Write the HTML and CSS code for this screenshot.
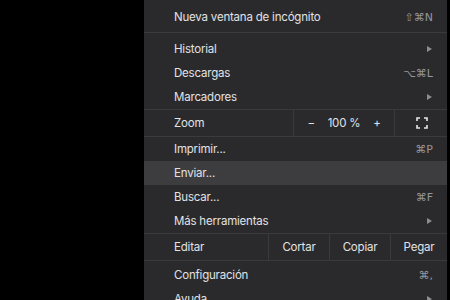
FILE: index.html
```html
<!DOCTYPE html>
<html lang="es">
<head>
  <meta charset="UTF-8">
  <title>Menú</title>
  <link rel="stylesheet" href="styles.css">
</head>
<body>
  <div class="menu">
    <div class="item first">
      <span>Nueva ventana de incógnito</span>
      <span class="key">⇧⌘N</span>
    </div>
    <div class="sep"></div>
    <div class="item">
      <span>Historial</span>
      <span class="arrow"></span>
    </div>
    <div class="item">
      <span>Descargas</span>
      <span class="key">⌥⌘L</span>
    </div>
    <div class="item">
      <span>Marcadores</span>
      <span class="arrow"></span>
    </div>

    <!-- Zoom -->
    <div class="row zoom">
      <div class="cell label">Zoom</div>
      <div class="cell zoom-ctrl">
        <span>−</span>
        <span class="pct">100 %</span>
        <span>+</span>
      </div>
      <div class="cell full">
        <svg width="12" height="12" viewBox="0 0 12 12" fill="none" stroke="#e6e6e6" stroke-width="1.6">
          <path d="M1 4V1h3M8 1h3v3M11 8v3H8M4 11H1V8"/>
        </svg>
      </div>
    </div>

    <div class="item">
      <span>Imprimir...</span>
      <span class="key">⌘P</span>
    </div>
    <div class="item active">
      <span>Enviar...</span>
    </div>
    <div class="item">
      <span>Buscar...</span>
      <span class="key">⌘F</span>
    </div>
    <div class="item">
      <span>Más herramientas</span>
      <span class="arrow"></span>
    </div>

    <!-- Editar -->
    <div class="row edit">
      <div class="cell label">Editar</div>
      <div class="cell btn">Cortar</div>
      <div class="cell btn">Copiar</div>
      <div class="cell btn">Pegar</div>
    </div>

    <div class="item gap">
      <span>Configuración</span>
      <span class="key">⌘,</span>
    </div>
    <div class="item">
      <span>Ayuda</span>
      <span class="arrow"></span>
    </div>
  </div>
</body>
</html>
```

FILE: styles.css
```css
body {
  margin: 0;
  background-color: black;
  font-family: Inter, "Liberation Sans", sans-serif;
  font-size: 11.5px;
  letter-spacing: -0.2px;
  color: #e2e2e4;
  height: 300px;
  overflow: hidden;
}

.menu {
  margin-left: 144px;
  width: 303px;
  height: 300px;
  background-color: #2a2a2d;
  overflow: hidden;
}

.item {
  display: flex;
  justify-content: space-between;
  align-items: center;
  height: 24px;
  padding: 0 14px 0 30px;
}

.item.first {
  margin-top: 5px;
}

.item.gap {
  margin-top: 2px;
}

.item.active {
  background-color: #3d3d40;
}

.key {
  color: #96969a;
  font-family: "DejaVu Sans", sans-serif;
  font-size: 11px;
  letter-spacing: 0;
}

.arrow {
  width: 0;
  height: 0;
  border-top: 3.5px solid transparent;
  border-bottom: 3.5px solid transparent;
  border-left: 5px solid #8d8d91;
  margin-right: 1px;
}

.sep {
  height: 1px;
  margin: 3px 0 4px;
  background-color: #3a3a3d;
}

/* filas con celdas */
.row {
  display: flex;
  height: 26px;
  border-top: 1px solid #3a3a3d;
  border-bottom: 1px solid #3a3a3d;
}

.cell {
  display: flex;
  align-items: center;
}

.cell.label {
  padding-left: 30px;
}

.zoom .label {
  width: 119px;
}

.zoom-ctrl {
  width: 102px;
  border-left: 1px solid #3a3a3d;
  border-right: 1px solid #3a3a3d;
  justify-content: space-around;
  padding: 0 8px;
  box-sizing: border-box;
}

.zoom-ctrl .pct {
  margin: 0 2px;
}

.full {
  flex: 1;
  justify-content: center;
  padding-left: 2px;
}

.edit .label {
  width: 94px;
}

.btn {
  justify-content: center;
  border-left: 1px solid #3a3a3d;
  width: 60px;
}

.btn:last-child {
  flex: 1;
  width: auto;
}
```
